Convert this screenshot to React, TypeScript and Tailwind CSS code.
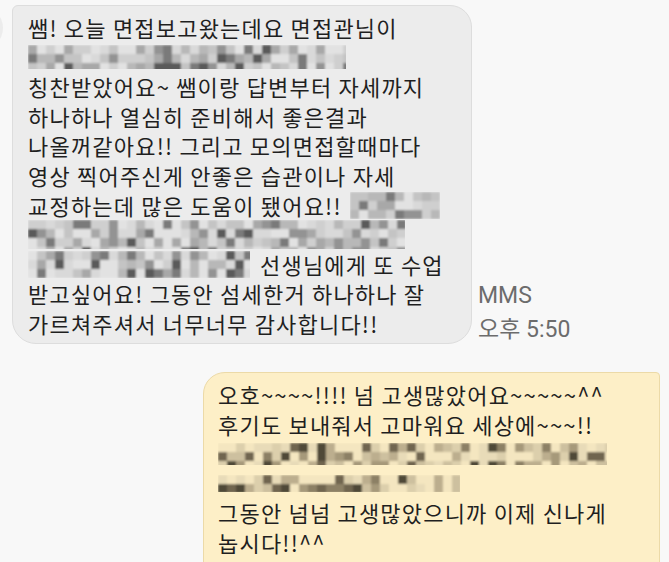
import React from 'react';

// small deterministic PRNG so the mosaic is the same on every render
const seeded = (seed: number) => {
  let t = seed;
  return () => {
    t = (t + 0x6d2b79f5) | 0;
    let r = Math.imul(t ^ (t >>> 15), 1 | t);
    r = (r + Math.imul(r ^ (r >>> 7), 61 | r)) ^ r;
    return ((r ^ (r >>> 14)) >>> 0) / 4294967296;
  };
};

const palettes = {
  gray: ['#e2e2e2', '#d9d9d9', '#cfcfcf', '#c4c4c4', '#b8b8b8', '#a8a8a8', '#939393', '#7a7a7a', '#5a5a5a'],
  yellow: ['#f4e6c0', '#e8dbb8', '#dccfac', '#cdc09f', '#bcae8e', '#a6997a', '#8c8065', '#6f6550', '#504939'],
};

const Mosaic: React.FC<{ w: number; h: number; seed: number; tone?: 'gray' | 'yellow'; dark?: number }> = ({
  w,
  h,
  seed,
  tone = 'gray',
  dark = 0.5,
}) => {
  const next = seeded(seed);
  const cell = 9;
  const cols = Math.ceil(w / cell);
  const rows = Math.ceil(h / cell);
  const pal = palettes[tone];
  const cells: React.ReactNode[] = [];
  for (let y = 0; y < rows; y++) {
    for (let x = 0; x < cols; x++) {
      const v = Math.pow(next(), 1.7 - dark);
      const idx = Math.min(pal.length - 1, Math.floor(v * pal.length));
      cells.push(<rect key={`${x}-${y}`} x={x * cell} y={y * cell} width={cell} height={cell} fill={pal[idx]} />);
    }
  }
  const fid = `soft-${seed}`;
  return (
    <svg width={w} height={h} className="inline-block align-middle">
      <defs>
        <filter id={fid} x="0" y="0" width="100%" height="100%">
          <feGaussianBlur stdDeviation="1.1" />
        </filter>
      </defs>
      <g filter={`url(#${fid})`}>{cells}</g>
    </svg>
  );
};

const Line: React.FC<{ children: React.ReactNode }> = ({ children }) => (
  <div className="h-[29.6px] whitespace-nowrap flex items-center">{children}</div>
);

export default function App() {
  return (
    <div
      className="w-[669px] h-[562px] overflow-hidden bg-[#f8f8f8] text-[#1f1f1f] text-[22px] leading-[29.6px] tracking-[1.2px]"
      style={{ fontFamily: '"Noto Sans CJK KR", "Noto Sans", sans-serif' }}
    >
      <div className="flex items-start pt-[5px]">
        <div className="w-[44px] h-[44px] rounded-full bg-[#ececec] -ml-[41px] mt-[1px] shrink-0" />
        <div className="ml-[9px] w-[460px] h-[339px] shrink-0 bg-[#ececec] border border-[#dddddd] rounded-tl-[6px] rounded-tr-[22px] rounded-b-[24px] pl-[15px] pt-[7px]">
          <Line>쌤! 오늘 면접보고왔는데요 면접관님이</Line>
          <Line>
            <Mosaic w={318} h={24} seed={3} dark={0.1} />
          </Line>
          <Line>칭찬받았어요~ 쌤이랑 답변부터 자세까지</Line>
          <Line>하나하나 열심히 준비해서 좋은결과</Line>
          <Line>나올꺼같아요!! 그리고 모의면접할때마다</Line>
          <Line>영상 찍어주신게 안좋은 습관이나 자세</Line>
          <Line>
            교정하는데 많은 도움이 됐어요!!
            <span className="ml-[8px] inline-flex">
              <Mosaic w={90} h={27} seed={11} dark={0.4} />
            </span>
          </Line>
          <Line>
            <Mosaic w={377} h={29} seed={21} dark={0.3} />
          </Line>
          <Line>
            <Mosaic w={222} h={27} seed={35} dark={0.4} />
            <span className="ml-[10px]">선생님에게 또 수업</span>
          </Line>
          <Line>받고싶어요! 그동안 섬세한거 하나하나 잘</Line>
          <Line>가르쳐주셔서 너무너무 감사합니다!!</Line>
        </div>
        <div
          className="self-end ml-[6px] -mb-[3px] flex flex-col text-[23px] leading-[34px] tracking-normal text-[#6c6c6c] whitespace-nowrap"
          style={{ fontFamily: 'Roboto, "Noto Sans CJK KR", sans-serif' }}
        >
          <span>MMS</span>
          <span>오후 5:50</span>
        </div>
      </div>

      <div className="flex justify-end pr-[9px] mt-[28px]">
        <div className="w-[457px] h-[260px] shrink-0 bg-[#fdefc7] border border-[#ecdaa8] rounded-tl-[22px] rounded-tr-[4px] pl-[14px] pt-[7px]">
          <Line>오호~~~~!!!! 넘 고생많았어요~~~~~^^</Line>
          <Line>후기도 보내줘서 고마워요 세상에~~~!!</Line>
          <Line>
            <Mosaic w={389} h={22} seed={51} tone="yellow" dark={0.25} />
          </Line>
          <Line>
            <Mosaic w={242} h={17} seed={63} tone="yellow" dark={0.25} />
          </Line>
          <Line>그동안 넘넘 고생많았으니까 이제 신나게</Line>
          <Line>놉시다!!^^</Line>
        </div>
      </div>
    </div>
  );
}
